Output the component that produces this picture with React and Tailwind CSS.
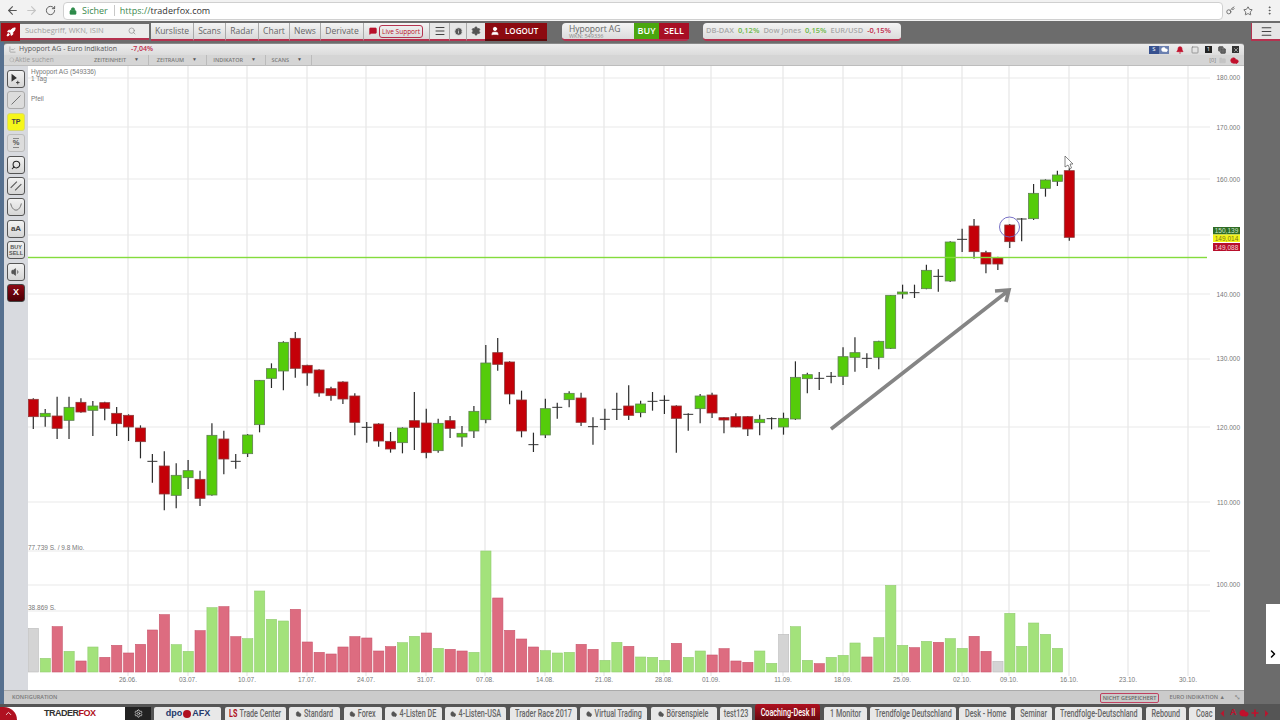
import React from 'react';
import { ArrowLeft, ArrowRight, RotateCw, Lock, Key, Star, EllipsisVertical, Menu, Info, Settings, User, Search, MessageSquare, Rocket, Volume1, ChevronUp, ChevronLeft, ChevronRight, X, Bell, Cloud, Folder, Plus, Copy, Square, LineChart } from 'lucide-react';

const sans = "font-['Open_Sans','Liberation_Sans',sans-serif]";
const arial = "font-['Liberation_Sans',Arial,sans-serif]";
const roboto = "font-['Roboto','Liberation_Sans',sans-serif]";

// candles sampled at 3x: [kind, wick top, body top, body bottom, wick bottom]
const early = [
  ['r', 205, 208, 260, 297], ['g', 237, 250, 260, 290], ['r', 200, 258, 295, 327], ['g', 200, 232, 271, 327],
  ['r', 205, 217, 246, 248], ['g', 213, 228, 241, 318], ['r', 215, 218, 235, 271], ['r', 231, 250, 281, 318],
  ['r', 253, 256, 291, 333], ['r', 286, 294, 335, 385], ['d', 372, 394, 394, 458], ['r', 364, 408, 492, 541],
  ['g', 400, 436, 496, 535], ['g', 390, 422, 443, 477], ['r', 422, 448, 505, 528], ['g', 280, 316, 495, 497],
  ['r', 302, 327, 387, 433], ['d', 372, 394, 394, 416], ['g', 312, 315, 371, 381], ['g', 150, 151, 284, 307],
  ['g', 100, 116, 145, 174], ['g', 34, 37, 123, 181], ['r', 6, 25, 115, 143], ['r', 104, 106, 129, 167],
  ['r', 118, 120, 189, 200], ['r', 170, 176, 197, 212], ['r', 154, 156, 207, 222], ['r', 190, 198, 277, 316],
  ['d', 276, 292, 292, 338], ['r', 280, 282, 333, 350], ['r', 306, 334, 357, 368], ['g', 292, 294, 338, 370],
  ['r', 186, 272, 292, 360], ['r', 236, 279, 368, 385], ['g', 266, 280, 362, 368], ['r', 258, 272, 295, 324],
  ['g', 288, 310, 321, 350], ['g', 228, 244, 303, 324], ['g', 45, 99, 269, 280], ['r', 24, 68, 103, 122],
  ['r', 94, 96, 192, 223], ['r', 182, 210, 303, 322], ['d', 308, 344, 344, 366], ['g', 206, 236, 315, 324],
  ['d', 218, 232, 232, 266], ['g', 184, 190, 209, 232], ['r', 188, 204, 277, 288], ['d', 262, 290, 290, 344],
  ['d', 236, 268, 268, 300], ['d', 188, 238, 238, 270], ['r', 166, 228, 256, 270], ['g', 212, 222, 248, 262],
  ['d', 186, 214, 214, 242], ['d', 196, 211, 211, 252], ['r', 226, 228, 265, 368], ['d', 250, 253, 253, 302],
  ['g', 192, 198, 236, 280], ['r', 188, 195, 249, 264], ['r', 262, 263, 270, 310], ['r', 250, 260, 291, 292],
  ['r', 258, 260, 297, 318], ['g', 254, 268, 278, 316], ['d', 262, 266, 266, 298], ['g', 248, 265, 291, 314],
  ['g', 94, 142, 267, 270], ['g', 128, 134, 146, 190], ['d', 126, 145, 145, 180],
];
const late = [
  ['d', 456, 469, 469, 490], ['g', 382, 410, 469, 495], ['g', 352, 398, 412, 455], ['d', 400, 415, 415, 444],
  ['g', 362, 364, 412, 448], ['g', 225, 226, 385, 387], ['g', 194, 216, 222, 236], ['d', 194, 218, 218, 234],
  ['g', 134, 151, 206, 208], ['d', 148, 169, 169, 215], ['g', 64, 66, 183, 186], ['d', 26, 58, 58, 96],
  ['r', -3, 18, 95, 116], ['r', 92, 98, 132, 160], ['r', 110, 114, 132, 150], ['r', 12, 15, 65, 84],
];
const last = [
  ['d', 234, 237, 237, 304], ['g', 132, 160, 236, 240], ['g', 118, 120, 145, 170], ['g', 92, 105, 124, 138],
  ['r', 85, 92, 292, 302],
];
const toPx = (rows, base) => rows.map(([k, a, b, c, d]) => [k, base + a / 3, base + b / 3, base + c / 3, base + d / 3]);
const candles = [...toPx(early, 330), ...toPx(late, 220), ...toPx(last, 140)];

// volume bars: kind + top (3x, from y 540)
const volumes = 'n265 g355 r260 g334 r363 g321 r352 r316 r339 r313 r270 r224 g314 g334 r272 g203 r200 r290 g296 g153 g238 g243 r208 r306 r337 r342 r321 r290 r294 r333 r320 g308 g289 r279 g325 r328 r333 g337 g33 r174 r271 r297 r321 g332 g339 g337 r313 r328 g361 g307 r319 g351 g352 g361 r310 g352 g333 r345 r326 r363 r367 g333 g370 n283 g260 g361 r371 g352 g346 g309 r351 g293 g136 g316 r323 g304 r307 g296 g325 r289 r334 n364 g220 g319 g249 g283 g325'
  .split(' ')
  .map((v) => [v[0], 540 + Number(v.slice(1)) / 3]);

const gridX = [128, 188, 247, 307, 366, 426, 485, 545, 604, 664, 711, 783, 843, 902, 962, 1009, 1069, 1128, 1188];
const dates = ['26.06.', '03.07.', '10.07.', '17.07.', '24.07.', '31.07.', '07.08.', '14.08.', '21.08.', '28.08.', '01.09.', '11.09.', '18.09.', '25.09.', '02.10.', '09.10.', '16.10.', '23.10.', '30.10.'];
const gridY = [78, 127, 179, 235, 294, 359, 427, 502, 551, 585, 611];
const prices = [['180.000', 77], ['170.000', 127], ['160.000', 179], ['140.000', 294], ['130.000', 358], ['120.000', 427], ['110.000', 502], ['100.000', 584]];

const candleX = (i) => 33.3 + i * 11.908;
const volumeFill = { g: '#a3e27b', r: '#dd6c80', n: '#d4d4d4' };
const volumeEdge = { g: '#93cc72', r: '#c8566c', n: '#bcbcbc' };

const Chart = () => (
  <svg viewBox="28 66 1216 624" className="block w-full h-full">
    {gridY.map((y) => (
      <line key={y} x1="28" x2="1210" y1={y} y2={y} stroke="#e9e9e9" strokeWidth="1.2" />
    ))}
    {gridX.map((x) => (
      <line key={x} x1={x} x2={x} y1="66" y2="676" stroke="#e6e6e6" strokeWidth="1.2" />
    ))}

    {volumes.map(([k, top], i) => (
      <rect key={i} x={candleX(i) - 5} y={top} width="10.2" height={672 - top} fill={volumeFill[k]} stroke={volumeEdge[k]} strokeWidth="0.6" />
    ))}

    {candles.map(([k, wt, bt, bb, wb], i) => {
      const x = candleX(i);
      return (
        <g key={i}>
          <line x1={x} x2={x} y1={wt} y2={wb} stroke="#2a2a2a" strokeWidth="1.2" />
          {k === 'd' ? (
            <line x1={x - 5} x2={x + 5} y1={bt} y2={bt} stroke="#333" strokeWidth="1" />
          ) : (
            <rect x={x - 5} y={bt} width="10" height={bb - bt} fill={k === 'g' ? '#55cc0a' : '#c40008'} stroke={k === 'g' ? '#5f7f52' : '#8c3b3b'} strokeWidth="0.8" />
          )}
        </g>
      );
    })}
    <rect x="28" y="256.8" width="1179" height="1.4" fill="#84dc3c" />

    {/* arrow and circle drawn on the chart */}
    <path d="M831 429 L1008 291 M995 291 L1009 290 L1006 302" fill="none" stroke="#858585" strokeWidth="3.6" />
    <circle cx="1009.5" cy="227" r="10" fill="none" stroke="#6a62c0" strokeWidth="0.9" />
    <path d="M1065 156 L1065 167 L1068 165 L1070 169 L1071.5 168 L1070 164 L1073 164 Z" fill="#fff" stroke="#555" strokeWidth="0.7" />

    <g className={`${arial} text-[6.5px] fill-[#777]`}>
      <text x="31" y="74">Hypoport AG (549336)</text>
      <text x="31" y="81">1 Tag</text>
      <text x="31" y="100.5">Pfeil</text>
      <text x="28" y="550">77.739 S. / 9.8 Mio.</text>
      <text x="28" y="609.5">38.869 S.</text>
      {prices.map(([p, y]) => (
        <text key={p} x="1240" y={y + 2.5} textAnchor="end">{p}</text>
      ))}
      {dates.map((d, i) => (
        <text key={d} x={gridX[i]} y="681.5" textAnchor="middle">{d}</text>
      ))}
    </g>

    <rect x="1213" y="227" width="27" height="7.5" fill="#2f6b25" />
    <rect x="1213" y="234.5" width="27" height="7.5" fill="#f3f31a" />
    <rect x="1213" y="243" width="27" height="8" fill="#b80f2c" />
    <g className={`${arial} text-[6.5px]`}>
      <text x="1226.5" y="233.2" textAnchor="middle" fill="#cfe8c8">150,139</text>
      <text x="1226.5" y="240.8" textAnchor="middle" fill="#77771a">149,014</text>
      <text x="1226.5" y="249.5" textAnchor="middle" fill="#f5d5d5">149,088</text>
    </g>
  </svg>
);

const BrowserBar = () => (
  <div className="flex items-center h-[21px] bg-[#f2f2f2] text-[#5f6368] shrink-0">
    <ArrowLeft className="w-[13px] h-[13px] ml-[6px] text-[#555]" />
    <ArrowRight className="w-[13px] h-[13px] ml-[6px] text-[#c4c4c4]" />
    <RotateCw className="w-[11px] h-[11px] ml-[7px] text-[#555]" />
    <div className={`flex items-center ml-[7px] w-[1160px] h-[18px] bg-white border border-[#d0d0d0] rounded-sm text-[9px] ${sans}`}>
      <Lock className="w-[8px] h-[8px] ml-[5px] text-[#2e8b4a] fill-[#2e8b4a]" />
      <span className="ml-[5px] text-[#3c8a50]">Sicher</span>
      <span className="ml-[6px] h-[11px] border-l border-[#c8c8c8]" />
      <span className="ml-[5px] text-[#3c8a50]">https://</span>
      <span className="text-[#333]">traderfox.com</span>
    </div>
    <Key className="w-[9px] h-[9px] ml-[3px] text-[#555]" />
    <Star className="w-[10px] h-[10px] ml-[8px] text-[#555]" />
    <EllipsisVertical className="w-[11px] h-[11px] ml-[11px] text-[#555]" />
  </div>
);

const NavButton = ({ label, width }) => (
  <div className={`flex items-center justify-center h-[18px] border-r border-[#aaa] border-b-2 border-b-[#b5324f] bg-linear-to-b from-[#f4f4f4] to-[#d9d9d9] text-[8.5px] text-[#666] ${sans} ${width}`}>
    {label}
  </div>
);

const NavBar = () => (
  <div className="flex items-center h-[21px] pt-px bg-[#6c6c6c] shrink-0">
    <div className="flex items-center justify-center ml-px w-[19px] h-[18px] bg-[#a80b14]">
      <Rocket className="w-[10px] h-[10px] text-white fill-white" />
    </div>
    <div className={`flex items-center w-[129px] h-[16px] bg-[#ececec] border-b-2 border-b-[#b5324f] text-[7.5px] text-[#a0a0a0] ${sans}`}>
      <span className="ml-[5px]">Suchbegriff, WKN, ISIN</span>
      <Search className="w-[8px] h-[8px] ml-auto mr-[13px] text-[#888]" />
    </div>
    <div className="w-[2px]" />
    <NavButton label="Kursliste" width="w-[43px]" />
    <NavButton label="Scans" width="w-[32px]" />
    <NavButton label="Radar" width="w-[33px]" />
    <NavButton label="Chart" width="w-[31px]" />
    <NavButton label="News" width="w-[31px]" />
    <NavButton label="Derivate" width="w-[43px]" />
    <div className="flex items-center w-[66px] h-[18px] border-r border-[#aaa] border-b-2 border-b-[#b5324f] bg-linear-to-b from-[#f4f4f4] to-[#d9d9d9]">
      <MessageSquare className="w-[8px] h-[8px] ml-[5px] text-[#b8102a] fill-[#b8102a]" />
      <span className={`ml-[2px] px-[2px] leading-[11px] border border-[#b5324f] rounded-[3px] text-[6.5px] text-[#b8102a] ${sans}`}>Live Support</span>
    </div>
    <div className="flex items-center justify-center w-[20px] h-[18px] border-r border-[#aaa] border-b-2 border-b-[#b5324f] bg-[#e6e6e6]">
      <Menu className="w-[12px] h-[12px] text-[#444]" />
    </div>
    <div className="flex items-center justify-center w-[17px] h-[18px] border-r border-[#aaa] border-b-2 border-b-[#b5324f] bg-[#e6e6e6]">
      <Info className="w-[9px] h-[9px] text-[#e6e6e6] fill-[#555]" />
    </div>
    <div className="flex items-center justify-center w-[18px] h-[18px] border-b-2 border-b-[#b5324f] bg-[#e6e6e6]">
      <Settings className="w-[10px] h-[10px] text-[#555] fill-[#555]" />
    </div>
    <div className={`flex items-center w-[62px] h-[18px] bg-[#8c0a10] border-b-2 border-b-[#5c0a0d] text-white text-[8px] font-semibold ${sans}`}>
      <User className="w-[10px] h-[10px] ml-[5px] text-white fill-white" />
      <span className="ml-[5px]">LOGOUT</span>
    </div>
    <div className={`flex items-center ml-[15px] w-[127px] h-[18px] rounded-sm border-b-2 border-b-[#b5324f] bg-linear-to-b from-[#f4f4f4] to-[#dcdcdc] ${sans}`}>
      <div className="ml-[7px] w-[64px]">
        <div className="text-[8.5px] leading-[9px] text-[#666]">Hypoport AG</div>
        <div className="text-[5.5px] leading-[6px] text-[#888]">WKN: 549336</div>
      </div>
      <span className="flex items-center justify-center ml-px w-[25px] h-full bg-[#4aa60e] text-white text-[9px] font-semibold">BUY</span>
      <span className="flex items-center justify-center w-[30px] h-full bg-[#a80f25] text-white text-[9px] font-semibold">SELL</span>
    </div>
    <div className={`flex items-center gap-[4px] ml-[14px] pl-[3px] w-[198px] h-[18px] rounded-sm border-b-2 border-b-[#b5324f] bg-linear-to-b from-[#f4f4f4] to-[#dcdcdc] text-[7.5px] font-semibold whitespace-nowrap ${sans}`}>
      <span className="text-[#a8a8a8]">DB-DAX</span>
      <span className="text-[#6cb84a]">0,12%</span>
      <span className="text-[#a8a8a8]">Dow Jones</span>
      <span className="text-[#6cb84a]">0,15%</span>
      <span className="text-[#a8a8a8]">EUR/USD</span>
      <span className="text-[#c02a4a]">-0,15%</span>
    </div>
    <div className="flex items-center justify-center ml-auto w-[29px] h-[18px] border-b-2 border-l border-[#b5324f] bg-[#e6e6e6]">
      <Menu className="w-[13px] h-[13px] text-[#444]" />
    </div>
  </div>
);

const TitleBar = () => (
  <div className={`flex items-center h-[12px] rounded-t-[3px] border-t border-[#888] bg-linear-to-b from-[#ececec] to-[#dcdcdc] ${sans}`}>
    <LineChart className="w-[7px] h-[7px] ml-[5px] text-[#888]" />
    <span className="ml-[3px] text-[7px] text-[#555]">Hypoport AG - Euro Indikation</span>
    <span className="ml-[14px] text-[7px] font-semibold text-[#c02a4a]">-7,04%</span>
    <div className="flex items-center ml-auto">
      <span className="flex items-center justify-center w-[10px] h-[8px] bg-[#37518f] text-[6px] text-white">S</span>
      <span className="flex items-center justify-center w-[10px] h-[8px] bg-[#6b80b0]">
        <Cloud className="w-[7px] h-[7px] text-white fill-white" />
      </span>
      <Bell className="w-[8px] h-[8px] ml-[7px] text-[#c2102c] fill-[#c2102c]" />
      <Square className="w-[8px] h-[8px] ml-[7px] text-[#777]" />
      <span className="flex items-center justify-center w-[7px] h-[7px] ml-[6px] bg-[#222] text-[6px] text-white">1</span>
      <Copy className="w-[8px] h-[8px] ml-[6px] text-[#333] fill-[#666]" />
      <span className="flex items-center justify-center w-[7px] h-[7px] ml-[6px] mr-[5px] bg-[#333]">
        <X className="w-[6px] h-[6px] text-white" />
      </span>
    </div>
  </div>
);

const menuItems = [['ZEITEINHEIT', 'w-[58px]'], ['ZEITRAUM', 'w-[58px]'], ['INDIKATOR', 'w-[59px]'], ['SCANS', 'w-[46px]']];

const SearchRow = () => (
  <div className={`flex items-center h-[11px] bg-[#d5d5d5] border-b border-[#bdbdbd] text-[#7a7a7a] ${sans}`}>
    <div className="flex items-center w-[87px] h-full">
      <Search className="w-[6px] h-[6px] ml-[5px] text-[#aaa]" />
      <span className="text-[6.5px] text-[#999]">Aktie suchen</span>
    </div>
    {menuItems.map(([label, width]) => (
      <div key={label} className={`flex items-center justify-end h-full pr-[9px] gap-[8px] border-r border-[#bbb] text-[5.5px] font-semibold ${width}`}>
        <span>{label}</span>
        <span className="text-[5px] text-[#555]">▼</span>
      </div>
    ))}
    <div className="flex items-center ml-auto mr-[5px] gap-[3px] text-[5.5px]">
      <span>[0]</span>
      <Folder className="w-[7px] h-[7px] text-[#c4c4c4] fill-[#c4c4c4]" />
      <Cloud className="w-[9px] h-[9px] ml-[1px] text-[#c2102c] fill-[#c2102c]" />
    </div>
  </div>
);

const ToolButton = ({ children, className = 'bg-linear-to-b from-[#f2f2f2] to-[#d6d6d6] border-[#555] text-[#444]' }) => (
  <div className={`flex items-center justify-center w-[18px] h-[18px] rounded-[3px] border ${arial} ${className}`}>
    {children}
  </div>
);

const Toolbar = () => (
  <div className="flex flex-col items-center gap-[3.4px] w-[24px] pt-[4px] bg-[#d8dadf] shrink-0">
    <ToolButton>
      <svg viewBox="0 0 18 18" className="w-[16px] h-[16px]">
        <path d="M4 3L4 12L6.5 10L10 8Z" fill="#333" />
        <path d="M11 11V15M9 13H13" stroke="#333" strokeWidth="1" />
      </svg>
    </ToolButton>
    <ToolButton className="bg-[#dcdcdc] border-[#aaa]">
      <svg viewBox="0 0 18 18" className="w-[16px] h-[16px]"><path d="M4 14L14 4" stroke="#666" strokeWidth="1" /></svg>
    </ToolButton>
    <ToolButton className="bg-[#f6f61a] border-[#d8d870] text-[#444]"><span className="text-[7px] font-bold">TP</span></ToolButton>
    <ToolButton className="bg-[#dcdcdc] border-[#bbb] text-[#555]">
      <span className="text-[7.5px] font-bold leading-[8px] border-y border-[#888]">%</span>
    </ToolButton>
    <ToolButton><Search className="w-[10px] h-[10px] text-[#222] -scale-x-100" strokeWidth={2.5} /></ToolButton>
    <ToolButton>
      <svg viewBox="0 0 18 18" className="w-[16px] h-[16px]"><path d="M3 11L10 4M8 14L15 7" stroke="#555" strokeWidth="1.2" /></svg>
    </ToolButton>
    <ToolButton>
      <svg viewBox="0 0 18 18" className="w-[16px] h-[16px]"><path d="M3 5C5 15 13 15 15 5" fill="none" stroke="#666" strokeWidth="1" /></svg>
    </ToolButton>
    <ToolButton><span className="text-[8px] font-bold text-[#444]">aA</span></ToolButton>
    <ToolButton>
      <span className="text-[5.5px] font-bold leading-[6px] text-center text-[#555]">BUY<br />SELL</span>
    </ToolButton>
    <ToolButton><Volume1 className="w-[10px] h-[10px] text-[#555] fill-[#555]" /></ToolButton>
    <ToolButton className="bg-linear-to-b from-[#8c0a14] to-[#4c0006] border-[#444] text-white"><span className="text-[9px] font-bold">X</span></ToolButton>
  </div>
);

const ConfigBar = () => (
  <div className={`flex items-center h-[14px] bg-[#cbcbcb] border-t border-[#aaa] text-[5.5px] text-[#777] font-semibold ${sans}`}>
    <span className="ml-[8px]">KONFIGURATION</span>
    <span className="ml-auto px-[2px] leading-[8px] border border-[#c04060] rounded-[2px] text-[#666]">NICHT GESPEICHERT</span>
    <span className="ml-[10px]">EURO INDIKATION ▲</span>
    <span className="ml-[10px] mr-[5px] text-[#888]">⤡</span>
  </div>
);

const tabs = [
  ['Trade Center', 'w-[61px]', 'ls'],
  ['Standard', 'w-[51px]', 'c'],
  ['Forex', 'w-[38px]', 'c'],
  ['4-Listen DE', 'w-[57px]', 'c'],
  ['4-Listen-USA', 'w-[61px]', 'c'],
  ['Trader Race 2017', 'w-[67px]'],
  ['Virtual Trading', 'w-[67px]', 'c'],
  ['Börsenspiele', 'w-[66px]', 'c'],
  ['test123', 'w-[32px]'],
  ['Coaching-Desk II', 'w-[65px]', 'active'],
  ['1 Monitor', 'w-[43px]'],
  ['Trendfolge Deutschland', 'w-[86px]'],
  ['Desk - Home', 'w-[52px]'],
  ['Seminar', 'w-[37px]'],
  ['Trendfolge-Deutschland', 'w-[87px]'],
  ['Rebound', 'w-[40px]'],
];

const TabBar = () => (
  <div className="relative flex items-end h-[16px] gap-[3.4px] bg-[#555] overflow-hidden shrink-0">
    <div className="flex items-center w-[151px] h-[13px] shrink-0">
      <div className="flex items-center w-[125px] h-full bg-white">
        <div className="flex items-center justify-center w-[17px] h-full bg-[#b01020] rounded-tr-[13px]">
          <ChevronUp className="w-[9px] h-[9px] text-white" />
        </div>
        <span className={`ml-[27px] text-[9px] font-bold tracking-[-0.5px] text-[#333] ${arial}`}>TRADER<span className="text-[#b01020]">FOX</span></span>
      </div>
      <div className="flex items-center justify-center flex-1 h-full bg-[#222]">
        <Settings className="w-[9px] h-[9px] text-[#ddd]" />
      </div>
    </div>
    <div className={`flex items-center justify-center w-[67px] h-[13px] shrink-0 bg-[#e8e8e8] rounded-t-[2px] text-[9px] font-bold text-[#24386b] ${arial}`}>
      dpo<span className="mx-px w-[8px] h-[8px] rounded-full bg-[#b01020]" />AFX
    </div>
    {tabs.map(([label, width, mark]) =>
      mark === 'active' ? (
        <div key={label} className={`flex items-center justify-center shrink-0 h-[16px] rounded-t-[3px] bg-linear-to-b from-[#b01020] to-[#6a0a10] ${width}`}>
          <span className={`shrink-0 scale-x-[0.72] text-white text-[10px] font-medium whitespace-nowrap ${roboto}`}>{label}</span>
        </div>
      ) : (
        <div key={label} className={`flex items-center justify-center shrink-0 h-[13px] rounded-t-[2px] bg-[#e8e8e8] ${width}`}>
          <div className={`flex items-center shrink-0 gap-[3px] scale-x-[0.72] text-[#666] text-[10px] font-medium whitespace-nowrap ${roboto}`}>
            {mark === 'ls' && <span className="font-bold text-[#b01020]">LS</span>}
            {mark === 'c' && <Cloud className="w-[9px] h-[8px] text-[#555] fill-[#555]" />}
            {label}
          </div>
        </div>
      )
    )}
    <div className="flex items-center shrink-0 w-[60px] h-[13px] pl-[7px] rounded-t-[2px] bg-[#e8e8e8]">
      <span className={`shrink-0 origin-left scale-x-[0.72] text-[#666] text-[10px] font-medium ${roboto}`}>Coac</span>
    </div>
    <div className="absolute right-0 bottom-0 flex items-center gap-[1px] h-[14px] w-[65px] pl-[2px] pr-[1px] bg-[#555] text-[#c2102c]">
      <ChevronLeft className="w-[11px] h-[11px] fill-[#c2102c]" />
      <span className={`mx-[1px] text-[9px] font-bold ${arial}`}>A</span>
      <Cloud className="w-[10px] h-[10px] fill-[#c2102c]" />
      <Plus className="w-[10px] h-[10px]" strokeWidth={4} />
      <ChevronRight className="w-[11px] h-[11px] fill-[#c2102c]" />
    </div>
  </div>
);

const App = () => {
  return (
    <div className="flex flex-col w-[1280px] h-[720px] overflow-hidden bg-[#6c6c6c]">
      <BrowserBar />
      <NavBar />
      <div className="flex flex-1 min-h-0">
        <div className="w-[4px] bg-[#56708f] shrink-0" />
        <div className="flex flex-col w-[1240px] mt-[1px]">
          <TitleBar />
          <SearchRow />
          <div className="flex flex-1 min-h-0 bg-white">
            <Toolbar />
            <div className="flex-1 min-w-0"><Chart /></div>
          </div>
          <ConfigBar />
        </div>
        <div className="relative flex-1">
          <div className="absolute right-0 top-[562px] w-[14px] h-[60px] bg-white">
            <ChevronRight className="absolute left-[1px] top-[44px] w-[12px] h-[12px] text-black" strokeWidth={3} />
          </div>
        </div>
      </div>
      <TabBar />
    </div>
  );
};

export default App;
